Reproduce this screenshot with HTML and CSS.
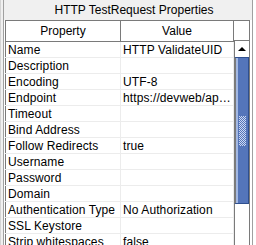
FILE: index.html
```html
<!DOCTYPE html>
<html lang="en">
<head>
  <meta charset="UTF-8" />
  <title>HTTP TestRequest Properties</title>
  <link rel="stylesheet" href="styles.css">
</head>
<body>
  <div class="frame">
    <div class="edge-left"></div>
    <div class="panel">
      <div class="title">HTTP TestRequest Properties</div>
      <div class="grid-wrap">
        <table class="props">
          <thead>
            <tr><th>Property</th><th>Value</th></tr>
          </thead>
          <tbody>
            <tr><td>Name</td><td>HTTP ValidateUID</td></tr>
            <tr><td>Description</td><td></td></tr>
            <tr><td>Encoding</td><td>UTF-8</td></tr>
            <tr><td>Endpoint</td><td>https://devweb/api/v1/validate</td></tr>
            <tr><td>Timeout</td><td></td></tr>
            <tr><td>Bind Address</td><td></td></tr>
            <tr><td>Follow Redirects</td><td>true</td></tr>
            <tr><td>Username</td><td></td></tr>
            <tr><td>Password</td><td></td></tr>
            <tr><td>Domain</td><td></td></tr>
            <tr><td>Authentication Type</td><td>No Authorization</td></tr>
            <tr><td>SSL Keystore</td><td></td></tr>
            <tr><td>Strip whitespaces</td><td>false</td></tr>
          </tbody>
        </table>
        <div class="vscroll">
          <div class="corner"></div>
          <div class="up-btn"><span class="arrow"></span></div>
          <div class="thumb">
            <svg class="grip" width="7" height="30" viewBox="0 0 7 30" shape-rendering="crispEdges">
              <path d="M0.5 0V30M2.5 0V30M4.5 0V30M6.5 0V30" stroke="#cdd9f2" stroke-dasharray="1 1"/>
              <path d="M1.5 1V30M3.5 1V30M5.5 1V30" stroke="#cdd9f2" stroke-dasharray="1 1"/>
            </svg>
          </div>
          <div class="track"></div>
        </div>
      </div>
    </div>
    <div class="edge-right"></div>
  </div>
</body>
</html>
```

FILE: styles.css
```css
body {
  margin: 0;
  background: #fff;
  font-family: 'Liberation Sans', Arial, sans-serif;
  font-size: 12px;
  color: #000;
  overflow: hidden;
}

.frame {
  display: flex;
  width: 256px;
  height: 245px;
  overflow: hidden;
}

.edge-left {
  flex: 0 0 2px;
  border-left: 1px solid #d4d4d4;
  border-right: 1px solid #a0a0a0;
  background: #f0f0f0;
}

.edge-right {
  flex: 0 0 3px;
  border-left: 1px solid #a0a0a0;
  background: #fff;
}

.panel {
  flex: 1;
  display: flex;
  flex-direction: column;
  min-width: 0;
}

.title {
  flex: 0 0 20px;
  line-height: 20px;
  background: #f0f0f0;
  text-align: center;
  padding-left: 12px;
  white-space: nowrap;
}

.grid-wrap {
  flex: 0 0 auto;
  display: flex;
  align-items: flex-start;
  padding-left: 1px;
  background: #fff;
}

.props {
  flex: 0 0 229px;
  width: 229px;
  table-layout: fixed;
  border-collapse: collapse;
}

.props th {
  height: 20px;
  font-weight: normal;
  border: 1px solid #7a7a7a;
  padding: 0;
}

.props th:first-child {
  width: 114px;
}

.props td {
  height: 14px;
  line-height: 14px;
  padding: 1px 0 0 2px;
  border: 1px solid #ececec;
  border-top: none;
  white-space: nowrap;
  overflow: hidden;
  text-overflow: ellipsis;
  letter-spacing: 0.1px;
}

.props td:first-child {
  border-left: 1px solid #7a7a7a;
}

/* scrollbar */
.vscroll {
  flex: 0 0 16px;
  width: 16px;
  height: 230px;
  box-sizing: border-box;
  border-right: 1px solid #7a7a7a;
  background: #fff;
}

.corner {
  height: 21px;
  box-sizing: border-box;
  border-top: 1px solid #7a7a7a;
  border-bottom: 1px solid #7a7a7a;
}

.up-btn {
  height: 16px;
  box-sizing: border-box;
  border-left: 1px solid #7a7a7a;
  display: flex;
  align-items: center;
  justify-content: center;
}

.arrow {
  width: 0;
  height: 0;
  border-left: 4px solid transparent;
  border-right: 4px solid transparent;
  border-bottom: 4px solid #000;
}

.thumb {
  height: 147px;
  box-sizing: border-box;
  border: 1px solid #2e4f8f;
  border-left: 2px solid #7a7a7a;
  background-color: #5475ba;
  box-shadow: inset 2px 0 0 #a3b8e2;
  display: flex;
  align-items: center;
  justify-content: center;
}

.grip {
  display: block;
}

.track {
  height: 46px;
  border-left: 1px solid #7a7a7a;
}
```
